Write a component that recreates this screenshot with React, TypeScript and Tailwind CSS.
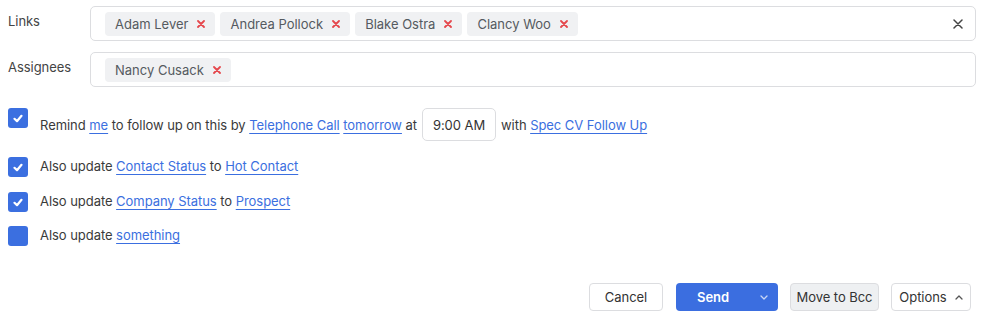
import React from "react"

const font = { fontFamily: "Inter, 'Noto Sans', sans-serif" }

function ChipX() {
    return (
        <svg width="8" height="8" viewBox="0 0 8 8" className="shrink-0">
            <path d="M1 1L7 7M7 1L1 7" stroke="#e5484d" strokeWidth="1.8" strokeLinecap="round" />
        </svg>
    )
}

function Chip({ name }: { name: string }) {
    return (
        <div className="flex items-center gap-[9px] h-[24px] pl-[10px] pr-[10px] rounded-[4px] bg-[#f0f1f3] text-[#555a60] tracking-normal">
            <span>{name}</span>
            <ChipX />
        </div>
    )
}

function CheckBox({ checked }: { checked: boolean }) {
    return (
        <div className="w-[20px] h-[20px] shrink-0 rounded-[3px] bg-[#3b6fe0] flex items-center justify-center">
            {checked && (
                <svg width="10" height="9" viewBox="0 0 10 9">
                    <path d="M1.5 4.8L4 7.2L8.5 1.8" stroke="white" strokeWidth="2.2" fill="none" strokeLinecap="round" strokeLinejoin="round" />
                </svg>
            )}
        </div>
    )
}

function A({ children }: { children: React.ReactNode }) {
    return <a className="text-[#3b6fe0] underline underline-offset-[3px] decoration-1 cursor-pointer">{children}</a>
}

export default function App() {
    return (
        <div className="w-[982px] h-[326px] bg-white text-[13px] leading-[16px] text-[#3a3a3a] tracking-[-0.05px]" style={font}>
            <div className="pl-[8px] pr-[6px] pt-[6px]">
                <div className="flex items-start">
                    <div className="w-[82px] pt-[7px] text-[#444]">Links</div>
                    <div className="flex-1 h-[35px] border border-[#dcdde0] rounded-[5px] pl-[14px] pr-[12px] flex items-center gap-[5px]">
                        <Chip name="Adam Lever" />
                        <Chip name="Andrea Pollock" />
                        <Chip name="Blake Ostra" />
                        <Chip name="Clancy Woo" />
                        <div className="flex-1" />
                        <svg width="10" height="10" viewBox="0 0 10 10">
                            <path d="M1 1L9 9M9 1L1 9" stroke="#444" strokeWidth="1.5" strokeLinecap="round" />
                        </svg>
                    </div>
                </div>
                <div className="flex items-start mt-[11px]">
                    <div className="w-[82px] pt-[7px] text-[#444]">Assignees</div>
                    <div className="flex-1 h-[35px] border border-[#dcdde0] rounded-[5px] pl-[14px] flex items-center gap-[5px]">
                        <Chip name="Nancy Cusack" />
                    </div>
                </div>
            </div>

            <div className="pl-[8px] mt-[21px]">
                <div className="flex items-start gap-[12px]">
                    <CheckBox checked />
                    <div className="h-[33px] flex items-center whitespace-pre">
                        <span>
                            Remind <A>me</A> to follow up on this by <A>Telephone Call</A> <A>tomorrow</A> at
                        </span>
                        <div className="ml-[5px] mr-[5px] w-[74px] h-[33px] border border-[#dcdde0] rounded-[5px] flex items-center justify-center text-[#333]">
                            9:00 AM
                        </div>
                        <span>
                            with <A>Spec CV Follow Up</A>
                        </span>
                    </div>
                </div>
                <div className="flex items-center gap-[12px] mt-[16px] whitespace-pre">
                    <CheckBox checked />
                    <span className="-mt-[2px]">
                        Also update <A>Contact Status</A> to <A>Hot Contact</A>
                    </span>
                </div>
                <div className="flex items-center gap-[12px] mt-[15px] whitespace-pre">
                    <CheckBox checked />
                    <span className="-mt-[2px]">
                        Also update <A>Company Status</A> to <A>Prospect</A>
                    </span>
                </div>
                <div className="flex items-center gap-[12px] mt-[14px] whitespace-pre">
                    <CheckBox checked={false} />
                    <span className="-mt-[2px]">
                        Also update <A>something</A>
                    </span>
                </div>
            </div>

            <div className="flex justify-end items-center pr-[11px] mt-[37px]">
                <button className="w-[74px] h-[28px] border border-[#dcdde0] rounded-[4px] bg-white text-[#333] flex items-center justify-center">
                    Cancel
                </button>
                <button className="ml-[13px] w-[102px] h-[28px] rounded-[4px] bg-[#3b6ee0] text-white flex items-center">
                    <span className="w-[74px] text-center font-semibold">Send</span>
                    <span className="w-[28px] flex justify-center">
                        <svg width="8" height="5" viewBox="0 0 8 5">
                            <path d="M1 1L4 4L7 1" stroke="#c9d6f5" strokeWidth="1.3" fill="none" strokeLinecap="round" strokeLinejoin="round" />
                        </svg>
                    </span>
                </button>
                <button className="ml-[12px] w-[89px] h-[28px] border border-[#dcdde0] rounded-[4px] bg-[#eef0f2] text-[#333] flex items-center justify-center">
                    Move to Bcc
                </button>
                <button className="ml-[12px] w-[80px] h-[28px] border border-[#dcdde0] rounded-[4px] bg-white text-[#333] flex items-center justify-center gap-[8px]">
                    <span>Options</span>
                    <svg width="8" height="5" viewBox="0 0 8 5">
                        <path d="M1 4L4 1L7 4" stroke="#555" strokeWidth="1.3" fill="none" strokeLinecap="round" strokeLinejoin="round" />
                    </svg>
                </button>
            </div>
        </div>
    )
}
